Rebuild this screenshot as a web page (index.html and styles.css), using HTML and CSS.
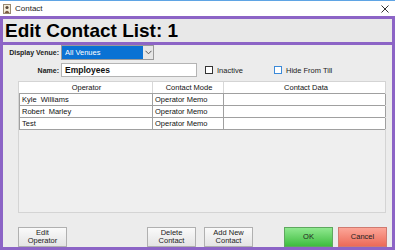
FILE: index.html
```html
<!DOCTYPE html>
<html lang="en">
    <head>
        <meta charset="UTF-8" />
        <title>Contact</title>
        <link rel="stylesheet" href="styles.css">
    </head>

    <body>
        <div class="titlebar">
            <svg class="titlebar__icon" width="8" height="10" viewBox="0 0 8 10">
                <rect x="0.5" y="0.5" width="7" height="9" fill="#f4ecd8" stroke="#9a8a70" />
                <circle cx="4" cy="3.5" r="1.6" fill="#5a4a3a" />
                <path d="M1.5 9 Q4 4.5 6.5 9 Z" fill="#7a5a40" />
            </svg>
            <span class="titlebar__text">Contact</span>
            <svg class="titlebar__close" width="8" height="8" viewBox="0 0 8 8">
                <path d="M0.5 0.5 L7.5 7.5 M7.5 0.5 L0.5 7.5" stroke="#333" stroke-width="1" />
            </svg>
        </div>

        <div class="header">
            <h1>Edit Contact List: 1</h1>
        </div>

        <div class="main">
            <div class="form-row">
                <label class="form-row__label">Display Venue:</label>
                <div class="select">
                    <span class="select__value">All Venues</span>
                    <span class="select__arrow">
                        <svg width="7" height="5" viewBox="0 0 7 5">
                            <path d="M0.5 0.8 L3.5 3.8 L6.5 0.8" fill="none" stroke="#555" stroke-width="1" />
                        </svg>
                    </span>
                </div>
            </div>

            <div class="form-row form-row--name">
                <label class="form-row__label">Name:</label>
                <div class="text-input">Employees</div>
                <div class="check">
                    <span class="check__box"></span>Inactive
                </div>
                <div class="check check--last">
                    <span class="check__box check__box--focus"></span>Hide From Till
                </div>
            </div>

            <div class="grid">
                <div class="grid__row grid__row--head">
                    <div class="grid__cell">Operator</div>
                    <div class="grid__cell">Contact Mode</div>
                    <div class="grid__cell">Contact Data</div>
                </div>
                <div class="grid__row">
                    <div class="grid__cell">Kyle&nbsp; Williams</div>
                    <div class="grid__cell">Operator Memo</div>
                    <div class="grid__cell"></div>
                </div>
                <div class="grid__row">
                    <div class="grid__cell">Robert&nbsp; Marley</div>
                    <div class="grid__cell">Operator Memo</div>
                    <div class="grid__cell"></div>
                </div>
                <div class="grid__row">
                    <div class="grid__cell">Test</div>
                    <div class="grid__cell">Operator Memo</div>
                    <div class="grid__cell"></div>
                </div>
            </div>

            <div class="actions">
                <button class="btn btn--edit">Edit<br />Operator</button>
                <button class="btn btn--delete">Delete<br />Contact</button>
                <button class="btn btn--add">Add New<br />Contact</button>
                <button class="btn btn--ok">OK</button>
                <button class="btn btn--cancel">Cancel</button>
            </div>
        </div>
    </body>
</html>
```

FILE: styles.css
```css
/* Reset */
html {
    box-sizing: border-box;
}

*,
*:before,
*:after {
    box-sizing: inherit;
}

body,
h1 {
    margin: 0;
    padding: 0;
}

body {
    width: 395px;
    height: 252px;
    overflow: hidden;
    background: #ffffff;
    font-family: "Liberation Sans", Arial, sans-serif;
    font-size: 7.5px;
    color: #111;
}

/* Title bar */
.titlebar {
    height: 16px;
    border-top: 1px solid #5fa4e4;
    display: flex;
    align-items: center;
    padding: 0 6px 0 3px;
}

.titlebar__icon {
    margin-right: 4px;
}

.titlebar__text {
    font-size: 8px;
    color: #222;
}

.titlebar__close {
    margin-left: auto;
}

/* Header */
.header {
    height: 29px;
    border: 3px solid #8c64c6;
    background: #e8e8e8;
    padding-left: 2px;
}

.header h1 {
    font-size: 19px;
    font-weight: bold;
    line-height: 23px;
    color: #000;
}

/* Main panel */
.main {
    height: 205px;
    border: 3px solid #8c64c6;
    border-top: none;
    background: #ececec;
    display: flex;
    flex-direction: column;
}

.form-row {
    display: flex;
    align-items: center;
    height: 15px;
}

.form-row--name {
    height: 14px;
    margin-top: 3px;
}

.form-row__label {
    width: 56px;
    margin-right: 2px;
    text-align: right;
    font-weight: bold;
    font-size: 7px;
    color: #222;
}

.select {
    width: 93px;
    height: 15px;
    display: flex;
    border: 1px solid #9a9a9a;
    background: #e6e6e6;
}

.select__value {
    flex: 1;
    background: #0a72d4;
    color: #fff;
    padding-left: 3px;
    line-height: 13px;
}

.select__arrow {
    width: 10px;
    display: flex;
    align-items: center;
    justify-content: center;
}

.text-input {
    width: 136px;
    height: 14px;
    border: 1px solid #b4b4b4;
    background: #fff;
    padding-left: 3px;
    font-weight: bold;
    font-size: 8.5px;
    line-height: 12px;
    color: #111;
}

.check {
    display: flex;
    align-items: center;
    margin-left: 8px;
    width: 69px;
    color: #222;
}

.check--last {
    margin-left: 0;
}

.check__box {
    width: 8px;
    height: 8px;
    border: 1px solid #333;
    background: #fff;
    margin-right: 4px;
}

.check__box--focus {
    border-color: #3c8ad8;
}

/* Grid */
.grid {
    margin: 4px 0 0 15px;
    width: 368px;
    height: 132px;
    border: 1px solid #d4d4d4;
    background: #efefef;
}

.grid__row {
    display: grid;
    grid-template-columns: 133px 71px 163px;
    height: 12px;
    background: #fff;
    border-bottom: 1px solid #a0a0a0;
}

.grid__row--head .grid__cell {
    text-align: center;
    border-left: 1px solid #d8d8d8;
}

.grid__row--head .grid__cell:first-child {
    border-left: none;
}

.grid__cell {
    line-height: 11px;
    padding-left: 2px;
    border-left: 1px solid #a0a0a0;
    overflow: hidden;
    white-space: nowrap;
    color: #111;
}

.grid__row:not(.grid__row--head) .grid__cell:last-child {
    border-right: 1px solid #a0a0a0;
}

/* Buttons */
.actions {
    display: flex;
    margin-top: 14px;
    padding-left: 15px;
}

.btn {
    width: 49px;
    height: 20px;
    padding: 0;
    font-family: inherit;
    font-size: 7.5px;
    line-height: 8px;
    color: #222;
    border: 1px solid #b0b0b0;
    background: linear-gradient(#fafafa, #e4e4e4);
}

.btn--delete {
    margin-left: 80px;
}

.btn--add {
    margin-left: 8px;
}

.btn--ok {
    margin-left: 31px;
    border-color: #5ea85e;
    background: linear-gradient(#8fe88f, #3fbd3f);
}

.btn--cancel {
    margin-left: 5px;
    border-color: #d07a70;
    background: linear-gradient(#fca698, #ec6a58);
}
```
